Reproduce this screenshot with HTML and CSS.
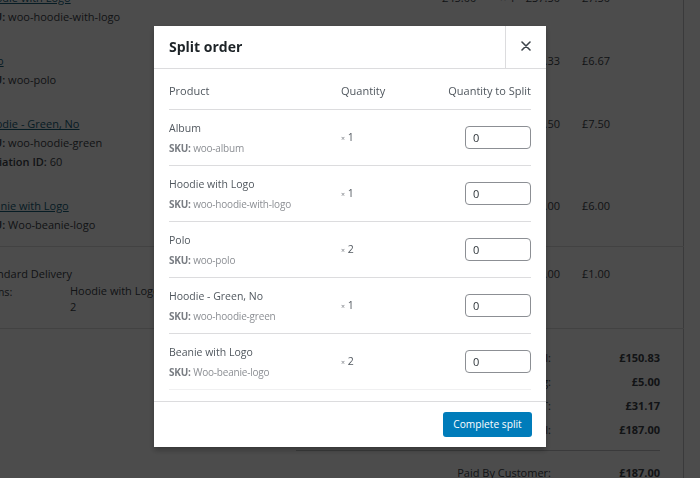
FILE: index.html
```html
<!DOCTYPE html>
<html>
<head>
<meta charset="utf-8">
<link rel="stylesheet" href="styles.css">
</head>
<body>
<div class="page">
  <div class="panel">
    <div class="items">
      <div class="item">
        <div class="c-name"><a class="plink">Hoodie with Logo</a><div class="meta"><b>SKU:</b> woo-hoodie-with-logo</div></div>
        <div class="c-cost">£45.00</div>
        <div class="c-qty">× 1</div>
        <div class="c-total">£37.50</div>
        <div class="c-tax">£7.50</div>
      </div>
      <div class="item">
        <div class="c-name"><a class="plink">Polo</a><div class="meta"><b>SKU:</b> woo-polo</div></div>
        <div class="c-cost">£20.00</div>
        <div class="c-qty">× 2</div>
        <div class="c-total">£33.33</div>
        <div class="c-tax">£6.67</div>
      </div>
      <div class="item">
        <div class="c-name"><a class="plink">Hoodie - Green, No</a><div class="meta"><b>SKU:</b> woo-hoodie-green</div><div class="meta"><b>Variation ID:</b> 60</div></div>
        <div class="c-cost">£45.00</div>
        <div class="c-qty">× 1</div>
        <div class="c-total">£37.50</div>
        <div class="c-tax">£7.50</div>
      </div>
      <div class="item">
        <div class="c-name"><a class="plink">Beanie with Logo</a><div class="meta"><b>SKU:</b> Woo-beanie-logo</div></div>
        <div class="c-cost">£18.00</div>
        <div class="c-qty">× 2</div>
        <div class="c-total">£30.00</div>
        <div class="c-tax">£6.00</div>
      </div>
    </div>
    <div class="shipping">
      <div class="c-name">
        <div class="ship-title">Standard Delivery</div>
        <div class="ship-meta"><span class="ship-label">Items:</span><span class="ship-val">Hoodie with Logo<br>2</span></div>
      </div>
      <div class="c-cost"></div>
      <div class="c-qty"></div>
      <div class="c-total">£4.00</div>
      <div class="c-tax">£1.00</div>
    </div>
    <div class="totals">
      <div class="t-label">Items Subtotal:</div><div class="t-val">£150.83</div>
      <div class="t-label">Shipping:</div><div class="t-val">£5.00</div>
      <div class="t-label">VAT:</div><div class="t-val">£31.17</div>
      <div class="t-label">Order Total:</div><div class="t-val">£187.00</div>
    </div>
    <div class="paid">
      <div class="t-label">Paid By Customer:</div><div class="t-val">£187.00</div>
    </div>
  </div>
</div>

<div class="overlay"></div>

<div class="modal">
  <div class="modal-header">
    <h1 class="modal-title">Split order</h1>
    <button class="modal-close" aria-label="Close">
      <svg width="10" height="10" viewBox="0 0 10 10"><path d="M1 1L9 9M9 1L1 9" stroke="#3c434a" stroke-width="1.6" stroke-linecap="round"/></svg>
    </button>
  </div>
  <div class="modal-content">
    <table class="split-table">
      <thead>
        <tr><th class="col-product">Product</th><th class="col-qty">Quantity</th><th class="col-split">Quantity to Split</th></tr>
      </thead>
      <tbody>
        <tr>
          <td class="col-product"><div class="pname">Album</div><div class="sku"><b>SKU:</b> woo-album</div></td>
          <td class="col-qty"><small class="times">×</small> 1</td>
          <td class="col-split"><input class="qinput" type="text" value="0"></td>
        </tr>
        <tr>
          <td class="col-product"><div class="pname">Hoodie with Logo</div><div class="sku"><b>SKU:</b> woo-hoodie-with-logo</div></td>
          <td class="col-qty"><small class="times">×</small> 1</td>
          <td class="col-split"><input class="qinput" type="text" value="0"></td>
        </tr>
        <tr>
          <td class="col-product"><div class="pname">Polo</div><div class="sku"><b>SKU:</b> woo-polo</div></td>
          <td class="col-qty"><small class="times">×</small> 2</td>
          <td class="col-split"><input class="qinput" type="text" value="0"></td>
        </tr>
        <tr>
          <td class="col-product"><div class="pname">Hoodie - Green, No</div><div class="sku"><b>SKU:</b> woo-hoodie-green</div></td>
          <td class="col-qty"><small class="times">×</small> 1</td>
          <td class="col-split"><input class="qinput" type="text" value="0"></td>
        </tr>
        <tr class="last">
          <td class="col-product"><div class="pname">Beanie with Logo</div><div class="sku"><b>SKU:</b> Woo-beanie-logo</div></td>
          <td class="col-qty"><small class="times">×</small> 2</td>
          <td class="col-split"><input class="qinput" type="text" value="0"></td>
        </tr>
      </tbody>
    </table>
  </div>
  <div class="modal-footer">
    <button class="btn-primary">Complete split</button>
  </div>
</div>
</body>
</html>
```

FILE: styles.css
```css
* { box-sizing: border-box; }
html, body {
  margin: 0;
  padding: 0;
  width: 700px;
  height: 478px;
  overflow: hidden;
  background: #ffffff;
  font-family: "Open Sans", "Noto Sans", sans-serif;
  font-size: 11px;
  color: #3c434a;
}

/* ---------- background order page ---------- */
.page {
  width: 700px;
  height: 478px;
  overflow: hidden;
}
.panel {
  width: 684px;
  height: 520px;
  margin-top: -25px;
  border-right: 1px solid #c3c4c7;
}
.items {
  margin-left: -19px;
}
.item, .shipping {
  display: grid;
  grid-template-columns: 461px 58px 22px 38px 22px 1fr;
  line-height: 19px;
  padding: 13px 0 12px;
}
.item .c-tax, .shipping .c-tax { grid-column: 6; }
.c-total {
  display: flex;
  justify-content: flex-end;
  white-space: nowrap;
}
.plink {
  color: #15607a;
  text-decoration: underline;
}
.meta b { font-weight: 600; }
.shipping {
  margin-left: -19px;
  width: 703px;
  padding: 17px 0 13px;
  border-top: 1px solid #dcdcde;
  border-bottom: 1px solid #dcdcde;
}
.shipping .c-name { white-space: nowrap; }
.ship-title { color: #3c434a; font-weight: 500; }
.ship-meta { display: flex; line-height: 17px; }
.ship-label { width: 89px; }
.ship-val { line-height: 16px; white-space: nowrap; }
.totals {
  display: grid;
  grid-template-columns: 1fr 100px;
  column-gap: 9px;
  width: 364px;
  margin-left: 296px;
  margin-top: 17px;
  line-height: 24px;
}
.t-label { text-align: right; }
.t-val { text-align: right; font-weight: 700; }
.paid {
  display: grid;
  grid-template-columns: 1fr 100px;
  column-gap: 9px;
  width: 364px;
  margin-left: 296px;
  margin-top: 8px;
  padding-top: 10px;
  border-top: 1px solid #c3c4c7;
  line-height: 24px;
}

/* ---------- overlay ---------- */
.overlay {
  position: fixed;
  inset: 0;
  background: rgba(0, 0, 0, 0.7);
}

/* ---------- modal ---------- */
.modal {
  position: fixed;
  left: 154px;
  top: 26px;
  width: 392px;
  height: 421px;
  background: #ffffff;
  display: flex;
  flex-direction: column;
  box-shadow: 0 3px 6px rgba(0,0,0,0.3);
}
.modal-header {
  display: flex;
  align-items: stretch;
  height: 43px;
  border-bottom: 1px solid #dcdcde;
}
.modal-title {
  flex: 1;
  margin: 0;
  padding: 0 15px;
  font-size: 14px;
  font-weight: 700;
  color: #1d2327;
  line-height: 42px;
}
.modal-close {
  width: 41px;
  border: 0;
  border-left: 1px solid #dcdcde;
  background: #fff;
  display: flex;
  align-items: center;
  justify-content: center;
  padding: 0 0 2px;
}
.modal-content {
  flex: 1;
  padding: 0 15px 11px;
}
.split-table {
  width: 100%;
  border-collapse: collapse;
  color: #50575e;
}
.split-table th {
  font-weight: 400;
  text-align: left;
  padding: 14px 0 10px;
  line-height: 16px;
  border-bottom: 1px solid #dcdcde;
  font-size: 11px;
  color: #50575e;
}
.split-table th.col-split { text-align: right; }
.split-table td {
  height: 56px;
  border-bottom: 1px solid #dcdcde;
  vertical-align: middle;
  padding: 0;
}
.split-table tr.last td { border-bottom-color: #f0f0f1; }
.col-product { width: 172px; }
.col-qty { width: 90px; }
.split-table td.col-qty { font-size: 10.5px; color: #50575e; padding-bottom: 1px; }
.times { font-size: 7px; color: #787c82; }
.split-table td.col-split { text-align: right; }
.pname {
  line-height: 16px;
  font-size: 10.5px;
  color: #50575e;
}
.sku {
  margin-top: 4px;
  line-height: 16px;
  font-size: 10px;
  letter-spacing: -0.2px;
  color: #8c8f94;
}
.sku b { font-weight: 700; color: #787c82; }
.qinput {
  width: 66px;
  height: 23px;
  border: 1px solid #8c8f94;
  border-radius: 4px;
  padding: 0 7px;
  font-family: inherit;
  font-size: 11px;
  color: #2c3338;
  background: #fff;
  vertical-align: middle;
}
.modal-footer {
  height: 46px;
  border-top: 1px solid #dcdcde;
  display: flex;
  justify-content: flex-end;
  align-items: center;
  padding: 0 14px 1px;
}
.btn-primary {
  height: 25px;
  width: 89px;
  border: 0;
  border-radius: 3px;
  background: #007cba;
  color: #ffffff;
  font-family: inherit;
  font-size: 10.2px;
  padding: 0;
}
```
